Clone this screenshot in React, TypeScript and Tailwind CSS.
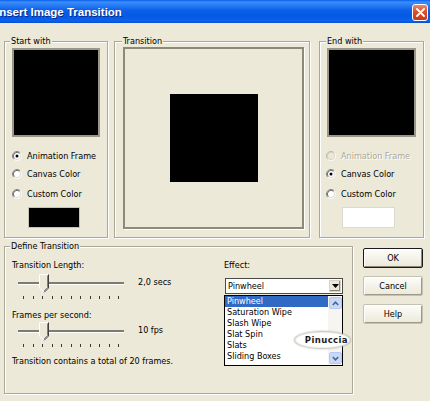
import React from 'react'

const FONT = "font-['DejaVu_Sans_Condensed','Liberation_Sans',sans-serif]"

function Radio({ checked = false, disabled = false }: { checked?: boolean; disabled?: boolean }) {
  return (
    <svg width="10" height="10" viewBox="0 0 12 12" className="shrink-0">
      <circle cx="6" cy="6" r="5" fill={disabled ? '#ece9d8' : '#fff'} />
      <path d="M2.11 9.89 A5.5 5.5 0 0 1 9.89 2.11" fill="none" stroke={disabled ? '#b5b2a5' : '#808080'} />
      <path d="M2.82 9.18 A4.5 4.5 0 0 1 9.18 2.82" fill="none" stroke={disabled ? '#c9c6ba' : '#404040'} />
      <path d="M9.89 2.11 A5.5 5.5 0 0 1 2.11 9.89" fill="none" stroke="#fff" />
      <path d="M9.18 2.82 A4.5 4.5 0 0 1 2.82 9.18" fill="none" stroke="#d4d0c8" />
      {checked && <circle cx="6" cy="6" r="1.8" fill="#000" />}
    </svg>
  )
}

function Group({ label, labelLeft, className, children }: { label: string; labelLeft: string; className: string; children?: React.ReactNode }) {
  return (
    <div className={`relative shrink-0 border border-[#aca899] shadow-[inset_1px_1px_0_#fff,1px_1px_0_#fff] ${className}`}>
      <span className={`absolute -top-[6px] ${labelLeft} bg-[#ece9d8] px-[1px] leading-[11px]`}>{label}</span>
      {children}
    </div>
  )
}

function RadioRow({ label, checked, disabled, className }: { label: string; checked?: boolean; disabled?: boolean; className: string }) {
  return (
    <div className={`flex h-[18px] items-center gap-[5px] ${className}`}>
      <Radio checked={checked} disabled={disabled} />
      <span className={disabled ? 'text-[#aca899] [text-shadow:1px_1px_0_#fff]' : ''}>{label}</span>
    </div>
  )
}

function Slider({ thumbLeft }: { thumbLeft: string }) {
  return (
    <div className="relative h-[26px] w-[112px] shrink-0">
      <div className="absolute left-0 top-[8px] h-[3px] w-[106px] border-b border-white bg-[#7d7b70]" />
      <div className="absolute left-[5px] top-[22px] flex w-[96px] justify-between">
        {Array.from({ length: 11 }).map((_, i) => (
          <div key={i} className="h-[3px] w-[1px] bg-[#3a3a3a]" />
        ))}
      </div>
      <svg width="10" height="19" viewBox="0 0 10 19" className={`absolute top-0 ${thumbLeft}`}>
        <path d="M0.5 0.5 H9.5 V14 L5 18.5 L0.5 14 Z" fill="#ece9d8" />
        <path d="M0.5 14 V0.5 H9" fill="none" stroke="#fff" />
        <path d="M9.5 0.5 V14 L5 18.5" fill="none" stroke="#404040" />
        <path d="M8.5 1.5 V13.6 L5 17" fill="none" stroke="#808080" />
        <path d="M0.5 14 L5 18.5" fill="none" stroke="#fff" />
      </svg>
    </div>
  )
}

function Button({ label, primary }: { label: string; primary?: boolean }) {
  return (
    <div
      className={`flex h-[20px] w-[60px] items-center justify-center rounded-[2px] bg-[linear-gradient(to_bottom,#fdfdfb,#ece9d8)] ${
        primary
          ? 'border border-[#1a1a1a] shadow-[inset_1px_1px_0_#fff,inset_-1px_-1px_0_#8a877a]'
          : 'border border-[#c5c2b4] shadow-[inset_1px_1px_0_#fff,inset_-1px_-1px_0_#9d9a8c]'
      }`}
    >
      {label}
    </div>
  )
}

const EFFECTS = ['Pinwheel', 'Saturation Wipe', 'Slash Wipe', 'Slat Spin', 'Slats', 'Sliding Boxes']

export default function App() {
  return (
    <div className={`relative h-[401px] w-[430px] overflow-hidden bg-[#ece9d8] text-[9px] leading-[11px] text-black ${FONT}`}>
      {/* Title bar */}
      <div className="flex h-[23px] items-center justify-between bg-[linear-gradient(to_bottom,#0a5fe8_0%,#3a8efd_9%,#2a7cf5_22%,#0c5fe6_45%,#0558e3_70%,#0a62ec_90%,#0a4fcf_100%)]">
        <span className="-ml-[4px] mt-[2px] font-['Liberation_Sans',sans-serif] text-[11.5px] font-bold text-white [text-shadow:1px_1px_0_#0b2a86]">
          Insert Image Transition
        </span>
        <div className="mr-[2px] mt-[2px] flex h-[17px] w-[16px] items-center justify-center rounded-[3px] border border-white bg-[linear-gradient(to_bottom,#ec8a68,#d9502d_45%,#c63a1c)]">
          <svg width="9" height="9" viewBox="0 0 9 9">
            <path d="M1 1 L8 8 M8 1 L1 8" stroke="#fff" strokeWidth="1.8" strokeLinecap="round" />
          </svg>
        </div>
      </div>

      {/* Top row */}
      <div className="mt-[18px] flex pl-[4px]">
        <Group label="Start with" labelLeft="left-[5px]" className="h-[197px] w-[104px]">
          <div className="ml-[7px] mt-[6px] h-[89px] w-[88px] border-2 border-[#9a978a] bg-black" />
          <RadioRow label="Animation Frame" checked className="ml-[7px] mt-[10px]" />
          <RadioRow label="Canvas Color" className="ml-[7px]" />
          <RadioRow label="Custom Color" className="ml-[7px] mt-[2px]" />
          <div className="ml-[23px] mt-[4px] h-[21px] w-[52px] border border-[#c7c4b6] bg-black" />
        </Group>

        <Group label="Transition" labelLeft="left-[7px]" className="ml-[6px] h-[197px] w-[196px]">
          <div className="ml-[8px] mt-[5px] flex h-[182px] w-[181px] items-center justify-center border-2 border-[#8c8a7d] shadow-[1px_1px_0_#fff]">
            <div className="h-[88px] w-[88px] bg-black" />
          </div>
        </Group>

        <Group label="End with" labelLeft="left-[6px]" className="ml-[9px] h-[197px] w-[105px]">
          <div className="ml-[7px] mt-[6px] h-[89px] w-[89px] border-2 border-[#9a978a] bg-black" />
          <RadioRow label="Animation Frame" disabled className="ml-[6px] mt-[10px]" />
          <RadioRow label="Canvas Color" checked className="ml-[6px]" />
          <RadioRow label="Custom Color" className="ml-[6px] mt-[2px]" />
          <div className="ml-[22px] mt-[4px] h-[21px] w-[53px] border border-[#dcdad0] bg-white" />
        </Group>
      </div>

      {/* Bottom row */}
      <div className="mt-[8px] flex pl-[4px]">
        <Group label="Define Transition" labelLeft="left-[5px]" className="flex h-[148px] w-[349px]">
          <div className="ml-[7px] flex w-[212px] flex-col">
            <div className="mt-[13px]">Transition Length:</div>
            <div className="mt-[3px] flex pl-[6px]">
              <Slider thumbLeft="left-[21px]" />
              <span className="ml-[8px] mt-[3px]">2,0 secs</span>
            </div>
            <div className="mt-[10px]">Frames per second:</div>
            <div className="mt-[1px] flex pl-[6px]">
              <Slider thumbLeft="left-[21px]" />
              <span className="ml-[8px] mt-[3px]">10 fps</span>
            </div>
            <div className="mt-[8px]">Transition contains a total of 20 frames.</div>
          </div>

          <div className="flex flex-col">
            <div className="mt-[13px]">Effect:</div>
            <div className="ml-[1px] mt-[7px] flex h-[16px] w-[118px] items-center justify-between border border-[#4a4a4a] bg-white pl-[2px]">
              <span>Pinwheel</span>
              <div className="mr-[1px] flex h-[12px] w-[12px] items-center justify-center border border-[#d8d5c8] bg-[#ece9d8] shadow-[inset_-1px_-1px_0_#8a877a]">
                <svg width="7" height="4" viewBox="0 0 7 4">
                  <path d="M0 0 H7 L3.5 4 Z" fill="#000" />
                </svg>
              </div>
            </div>
            <div className="mt-[1px] flex h-[71px] w-[119px] border border-black bg-white">
              <div className="flex-1">
                {EFFECTS.map((e, i) => (
                  <div key={e} className={`h-[11px] pl-[2px] ${i === 0 ? 'bg-[#316ac5] text-white' : ''}`}>
                    {e}
                  </div>
                ))}
              </div>
              <div className="flex w-[14px] flex-col justify-between bg-[#f6f5f0] py-[1px]">
                <div className="mx-auto flex h-[12px] w-[13px] items-center justify-center rounded-[2px] border border-[#b7c9f3] bg-[#c8d8fb]">
                  <svg width="7" height="5" viewBox="0 0 7 5">
                    <path d="M0.8 4 L3.5 1.2 L6.2 4" fill="none" stroke="#4d6185" strokeWidth="1.5" />
                  </svg>
                </div>
                <div className="mx-auto flex h-[12px] w-[13px] items-center justify-center rounded-[2px] border border-[#b7c9f3] bg-[#c8d8fb]">
                  <svg width="7" height="5" viewBox="0 0 7 5">
                    <path d="M0.8 1 L3.5 3.8 L6.2 1" fill="none" stroke="#4d6185" strokeWidth="1.5" />
                  </svg>
                </div>
              </div>
            </div>
          </div>
        </Group>

        <div className="ml-[10px] mt-[2px] flex flex-col gap-[8px]">
          <Button label="OK" primary />
          <Button label="Cancel" />
          <Button label="Help" />
        </div>
      </div>

      {/* Watermark */}
      <div className="absolute left-[295px] top-[332px] flex h-[16px] w-[55px] items-center justify-end rounded-[50%] bg-white pr-[2px] shadow-[0_0_2px_1px_#b9b7ae,inset_0_0_2px_#cfcdc4]">
        <span className="font-['DejaVu_Sans',sans-serif] text-[8.5px] font-bold tracking-[0.4px] text-[#1a1a1a]">Pinuccia</span>
      </div>
    </div>
  )
}
